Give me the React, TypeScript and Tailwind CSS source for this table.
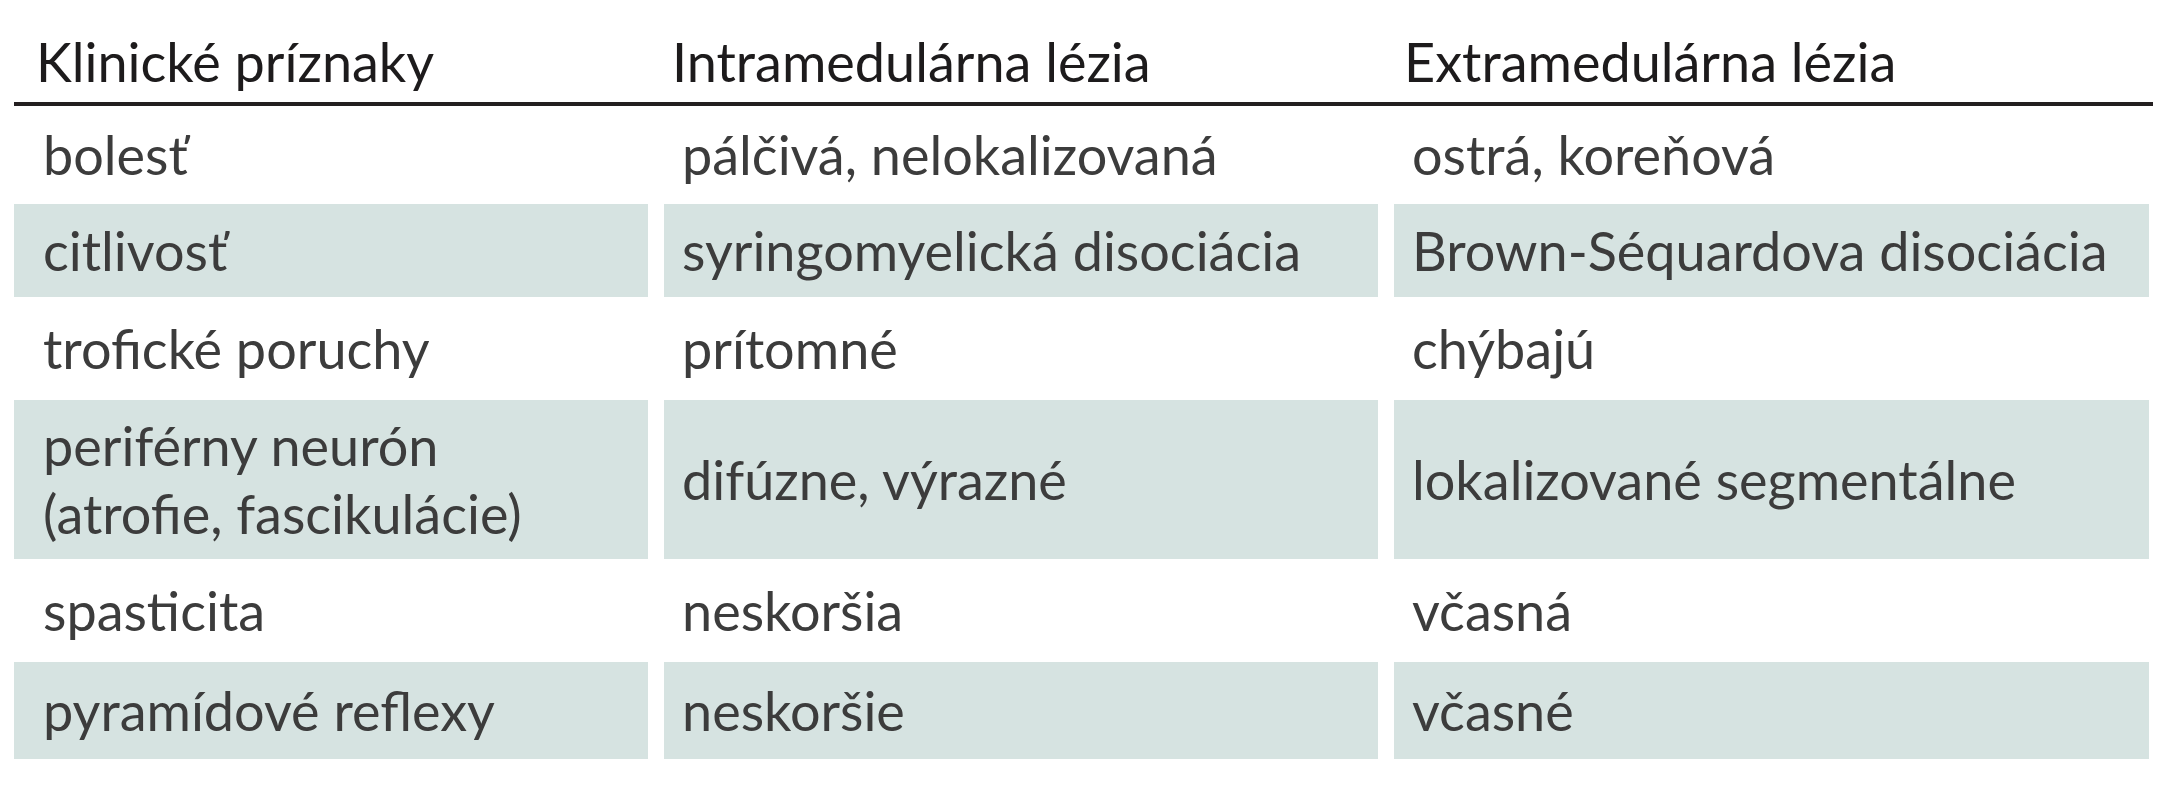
import React from 'react';

type Row = {
  height: string;
  shaded: boolean;
  cells: string[][];
};

const headers = ['Klinické príznaky', 'Intramedulárna lézia', 'Extramedulárna lézia'];
const headerPad = ['pl-[22px]', 'pl-[8px]', 'pl-[10px]'];
const cellPad = ['pl-[29px]', 'pl-[18px]', 'pl-[18px]'];

const rows: Row[] = [
  { height: 'h-[98px]', shaded: false, cells: [['bolesť'], ['pálčivá, nelokalizovaná'], ['ostrá, koreňová']] },
  { height: 'h-[93px]', shaded: true, cells: [['citlivosť'], ['syringomyelická disociácia'], ['Brown-Séquardova disociácia']] },
  { height: 'h-[103px]', shaded: false, cells: [['trofické poruchy'], ['prítomné'], ['chýbajú']] },
  {
    height: 'h-[159px]',
    shaded: true,
    cells: [['periférny neurón', '(atrofie, fascikulácie)'], ['difúzne, výrazné'], ['lokalizované segmentálne']],
  },
  { height: 'h-[103px]', shaded: false, cells: [['spasticita'], ['neskoršia'], ['včasná']] },
  { height: 'h-[97px]', shaded: true, cells: [['pyramídové reflexy'], ['neskoršie'], ['včasné']] },
];

export default function App() {
  return (
    <div className="w-[2160px] h-[800px] bg-white pl-[14px] font-['Lato','Open_Sans',sans-serif] text-[54px]">
      <div className="grid w-[2139px] h-[106px] grid-cols-[634px_714px_755px] gap-x-4 border-b-4 border-[#231f20]">
        {headers.map((h, i) => (
          <div key={h} className={`flex items-end pb-[6px] leading-[68px] text-[#1d1b1c] ${headerPad[i]}`}>
            {h}
          </div>
        ))}
      </div>

      {rows.map((row, r) => (
        <div key={r} className={`grid grid-cols-[634px_714px_755px] gap-x-4 ${row.height}`}>
          {row.cells.map((lines, c) => (
            <div
              key={c}
              className={`flex flex-col justify-center leading-[68px] text-[#3c3c3c] ${cellPad[c]} ${
                row.shaded ? 'bg-[#d6e3e1]' : ''
              }`}
            >
              {lines.map((line) => (
                <span key={line} className="whitespace-nowrap">
                  {line}
                </span>
              ))}
            </div>
          ))}
        </div>
      ))}
    </div>
  );
}
